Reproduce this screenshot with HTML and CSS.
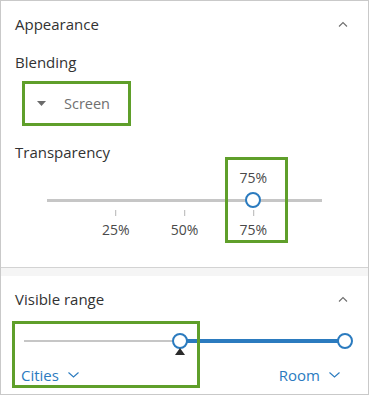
FILE: index.html
```html
<!DOCTYPE html>
<html lang="en">
<head>
  <meta charset="UTF-8">
  <meta name="viewport" content="width=device-width, initial-scale=1.0">
  <title>Layer properties</title>
  <link rel="stylesheet" href="styles.css">
</head>
<body>
  <div class="panel">
    <section class="block appearance">
      <div class="block-head">
        <span class="block-title">Appearance</span>
        <svg class="chevron" width="10" height="6" viewBox="0 0 10 6"><path d="M1 5.5 L5 1.5 L9 5.5" fill="none" stroke="#6e6e6e" stroke-width="1.1"/></svg>
      </div>

      <div class="field-label">Blending</div>
      <div class="dropdown highlight">
        <svg width="9" height="5" viewBox="0 0 9 5"><path d="M0 0 H9 L4.5 5 Z" fill="#6b6b6b"/></svg>
        <span>Screen</span>
      </div>

      <div class="field-label transparency-label">Transparency</div>
      <div class="slider">
        <div class="slider-value" style="left: 75%">75%</div>
        <div class="slider-track"></div>
        <div class="slider-handle" style="left: 75%"></div>
        <div class="slider-tick" style="left: 25%"><i></i><span>25%</span></div>
        <div class="slider-tick" style="left: 50%"><i></i><span>50%</span></div>
        <div class="slider-tick" style="left: 75%"><i></i><span>75%</span></div>
      </div>
      <div class="highlight box-transparency"></div>
    </section>

    <div class="block-gap"></div>

    <section class="block range">
      <div class="block-head">
        <span class="block-title">Visible range</span>
        <svg class="chevron" width="10" height="6" viewBox="0 0 10 6"><path d="M1 5.5 L5 1.5 L9 5.5" fill="none" stroke="#6e6e6e" stroke-width="1.1"/></svg>
      </div>

      <div class="range-slider">
        <div class="range-track"></div>
        <div class="range-fill" style="left: 48.75%; right: 0"></div>
        <div class="range-handle" style="left: 48.75%"></div>
        <div class="range-handle" style="left: 100%"></div>
        <div class="range-marker" style="left: 48.75%"></div>
      </div>

      <div class="range-scales">
        <button class="scale-select">Cities
          <svg width="11" height="6" viewBox="0 0 11 6"><path d="M0.5 0.5 L5.5 5 L10.5 0.5" fill="none" stroke="#2b7bbf" stroke-width="1.1"/></svg>
        </button>
        <button class="scale-select">Room
          <svg width="11" height="6" viewBox="0 0 11 6"><path d="M0.5 0.5 L5.5 5 L10.5 0.5" fill="none" stroke="#2b7bbf" stroke-width="1.1"/></svg>
        </button>
      </div>
      <div class="highlight box-range"></div>
    </section>
  </div>
</body>
</html>
```

FILE: styles.css
```css
body {
  margin: 0;
  background: #fff;
  font-family: "Open Sans", "Noto Sans", sans-serif;
  color: #323232;
}

.panel {
  width: 369px;
  height: 395px;
  box-sizing: border-box;
  border: 1px solid #c9c9c9;
  background: #fff;
}

.block {
  position: relative;
  padding: 0 0 0 14px;
}

.appearance {
  height: 266px;
  border-bottom: 1px solid #d3d3d3;
}

.block-gap {
  height: 8px;
  background: #f5f5f5;
}

.block-head {
  display: flex;
  align-items: center;
  justify-content: space-between;
  height: 46px;
  padding-right: 20px;
}

.block-title {
  font-size: 15px;
}

.chevron {
  display: block;
}

.field-label {
  font-size: 15px;
  line-height: 20px;
  margin-top: 5px;
  color: #323232;
}

.highlight {
  border: 3px solid #5f9f2a;
}

.dropdown {
  display: flex;
  align-items: center;
  gap: 18px;
  box-sizing: border-box;
  width: 109px;
  height: 45px;
  margin: 9px 0 0 7px;
  padding-left: 12px;
  font-size: 14.5px;
  color: #707070;
}

.transparency-label {
  margin-top: 16px;
}

.slider {
  position: relative;
  height: 80px;
  margin: 4px 46px 0 32px;
  font-size: 14px;
  color: #4a4a4a;
}

.slider-value {
  position: absolute;
  top: 2px;
  transform: translateX(-50%);
}

.slider-track {
  position: absolute;
  top: 33px;
  left: 0;
  right: 0;
  height: 3px;
  background: #c6c6c6;
}

.slider-handle,
.range-handle {
  position: absolute;
  width: 12px;
  height: 12px;
  border: 2px solid #2b7bbf;
  border-radius: 50%;
  background: #fff;
  transform: translateX(-50%);
}

.slider-handle {
  top: 26px;
}

.slider-tick {
  position: absolute;
  top: 44px;
  display: flex;
  flex-direction: column;
  align-items: center;
  transform: translateX(-50%);
}

.slider-tick i {
  width: 1px;
  height: 6px;
  background: #b5b5b5;
}

.slider-tick span {
  margin-top: 4px;
}

.box-transparency {
  position: absolute;
  left: 224px;
  top: 156px;
  width: 57px;
  height: 80px;
}

.range-slider {
  position: relative;
  height: 28px;
  margin: 6px 23px 0 9px;
}

.range-track {
  position: absolute;
  top: 12px;
  left: 0;
  right: 0;
  height: 2px;
  background: #c6c6c6;
}

.range-fill {
  position: absolute;
  top: 11px;
  height: 4px;
  background: #2b7bbf;
}

.range-handle {
  top: 5px;
}

.range-marker {
  position: absolute;
  top: 20px;
  width: 0;
  height: 0;
  border-left: 5px solid transparent;
  border-right: 5px solid transparent;
  border-bottom: 7px solid #2b2b2b;
  transform: translateX(-50%);
}

.range-scales {
  display: flex;
  justify-content: space-between;
  margin-top: 9px;
  padding: 0 28px 0 6px;
}

.scale-select {
  display: flex;
  align-items: center;
  gap: 9px;
  padding: 0;
  border: none;
  background: none;
  font-family: inherit;
  font-size: 15px;
  color: #2b7bbf;
}

.box-range {
  position: absolute;
  left: 11px;
  top: 45px;
  width: 182px;
  height: 61px;
}
```
